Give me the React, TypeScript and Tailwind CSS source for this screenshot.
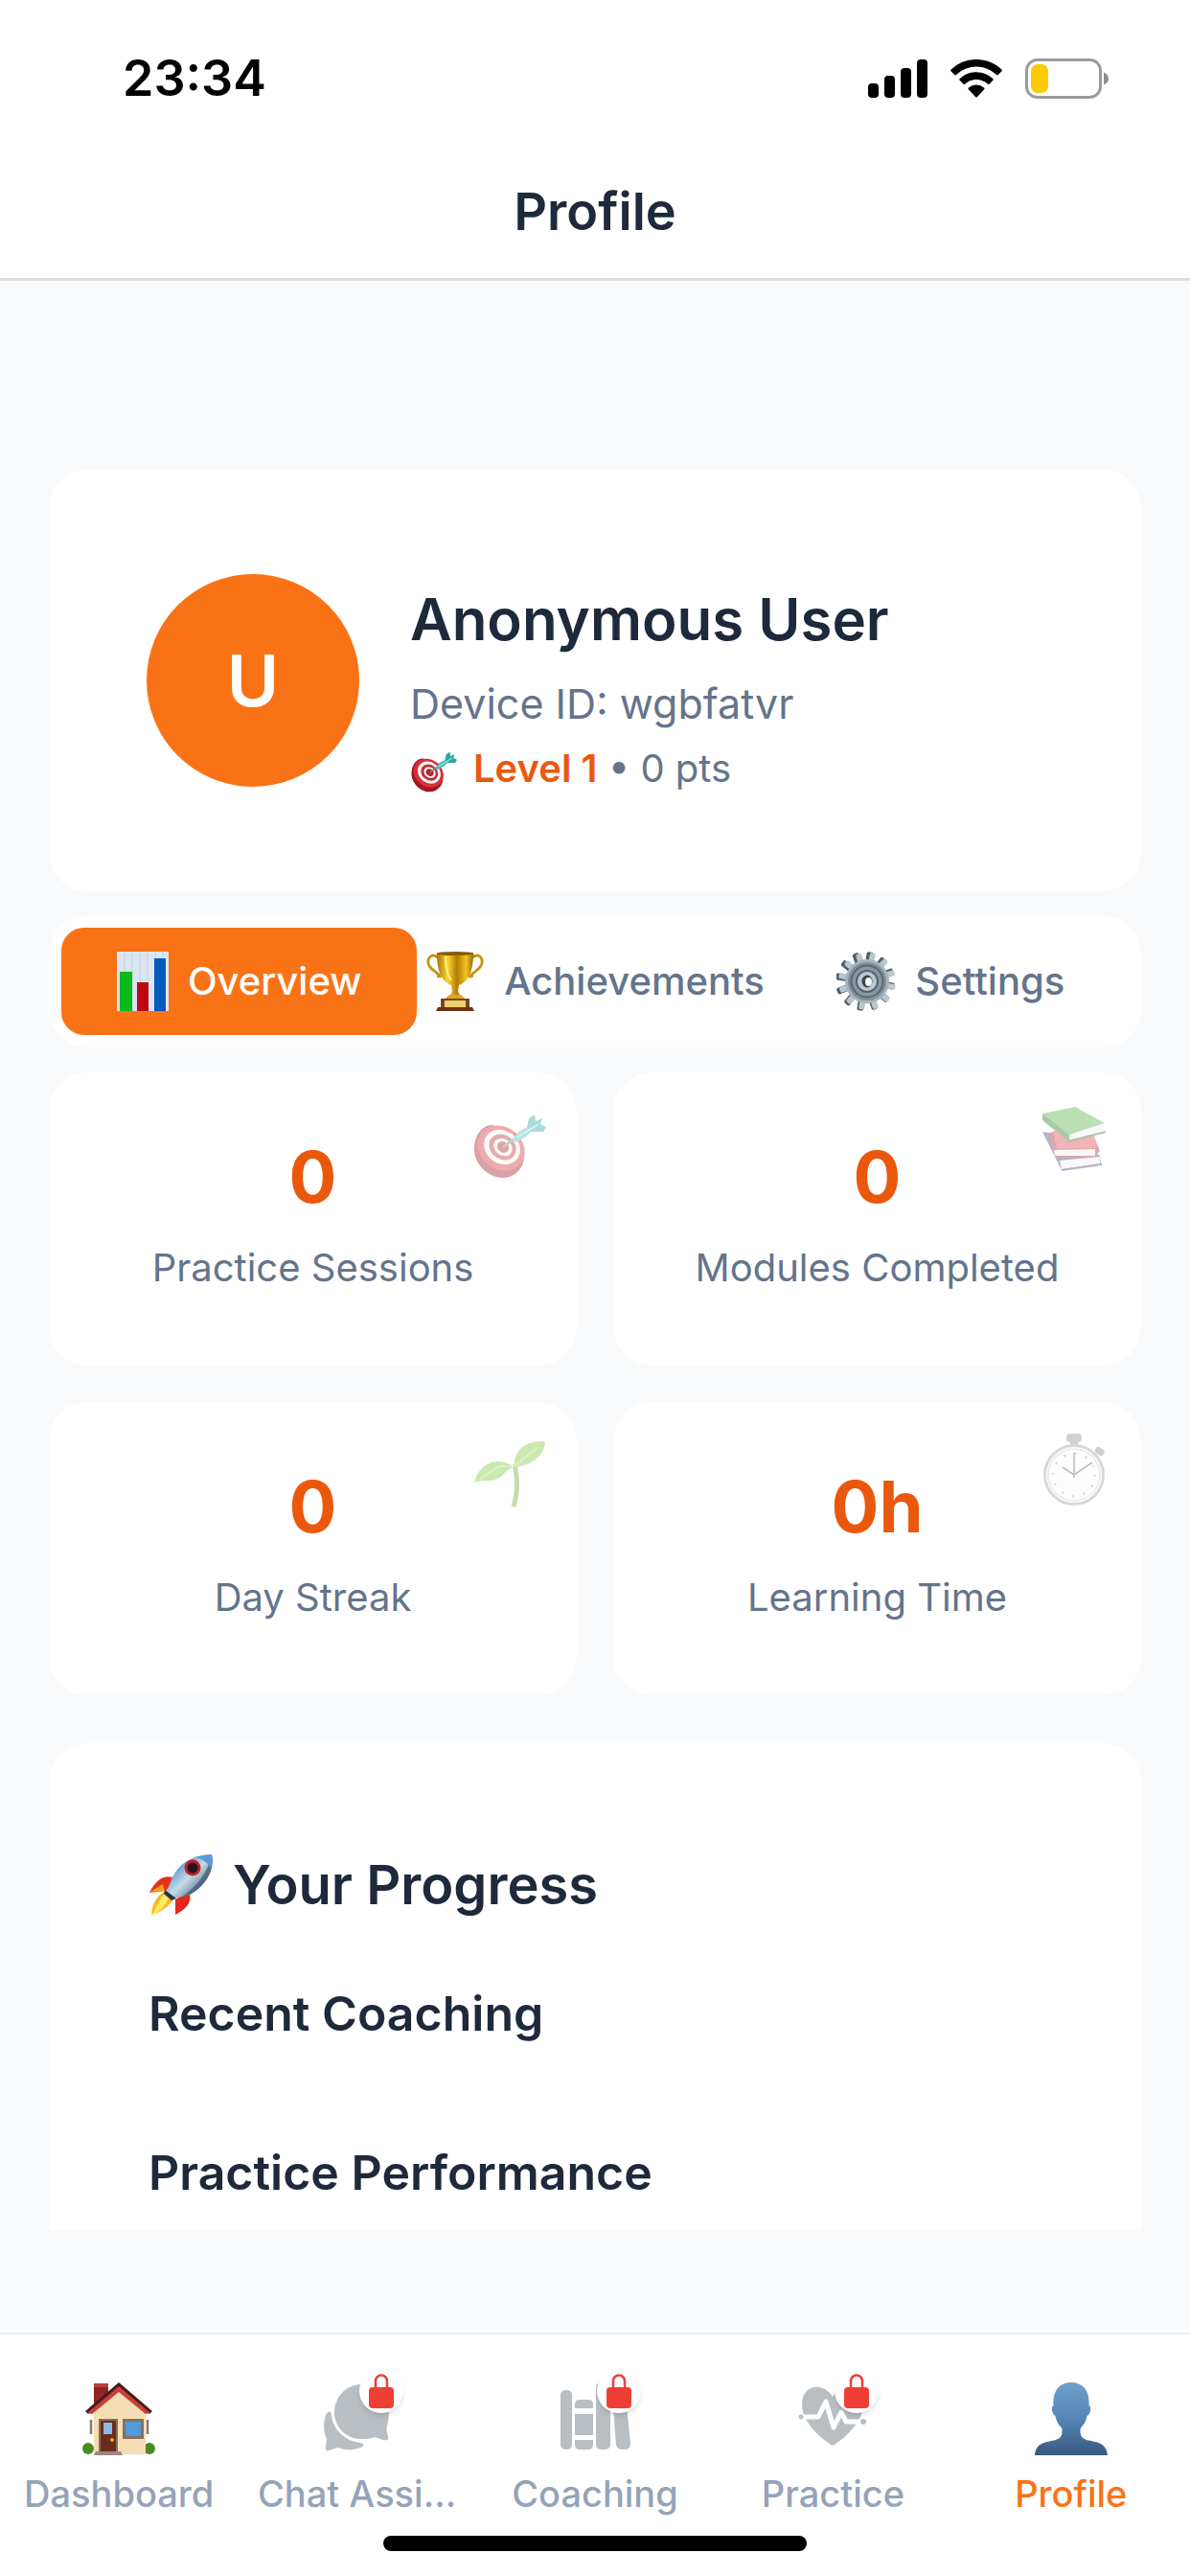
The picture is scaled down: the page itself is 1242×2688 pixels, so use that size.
import type { ReactNode } from "react";

type IconProps = { className?: string };

function SignalIcon() {
  return (
    <svg className="h-10 w-[62px]" viewBox="0 0 62 40" aria-hidden="true">
      <rect x="0" y="25" width="11" height="15" rx="4" />
      <rect x="17" y="17" width="11" height="23" rx="4" />
      <rect x="34" y="9" width="11" height="31" rx="4" />
      <rect x="51" y="0" width="11" height="40" rx="4" />
    </svg>
  );
}

function WifiIcon() {
  return (
    <svg className="h-10 w-[54px]" viewBox="0 0 54 40" aria-hidden="true">
      <path d="M27 0C37 0 46.500 4 53.300 10.400Q54.300 11.400 53.300 12.400L49.800 16Q49 16.800 48 15.900A30.500 30.500 0 0 0 6 15.900Q5 16.800 4.200 16L.7 12.400Q-.3 11.400.7 10.400A38.500 38.500 0 0 1 27 0Z" />
      <path d="M27 13.200A25 25 0 0 1 44.200 20Q45.200 21 44.200 22L40.500 25.700Q39.700 26.500 38.700 25.600A17.300 17.300 0 0 0 15.300 25.600Q14.300 26.500 13.500 25.700L9.800 22Q8.800 21 9.800 20A25 25 0 0 1 27 13.200Z" />
      <path d="M27 26.500A12 12 0 0 1 35 29.600Q36 30.600 35 31.600L28 38.900Q27 40 26 38.900L19 31.600Q18 30.600 19 29.600A12 12 0 0 1 27 26.500Z" />
    </svg>
  );
}

function BatteryIcon() {
  return (
    <svg className="h-[42px] w-[88px]" viewBox="0 0 88 42" aria-hidden="true">
      <rect x="1.500" y="1.500" width="77" height="39" rx="11" fill="none" stroke="#9b9b9b" strokeWidth="3" />
      <rect x="6" y="6" width="18" height="30" rx="7" fill="#fdcb05" />
      <path d="M82 14.500Q87 16.500 87 21Q87 25.500 82 27.500Z" fill="#8f8f8f" />
    </svg>
  );
}

function TargetIcon({ className }: IconProps) {
  return (
    <svg className={className} viewBox="0 -11 76 79" aria-hidden="true">
      <path d="M1 34C-1 50 14 67 31 67C43 67 53 57 53 44L45 20L20 12C9 12 2 22 1 34Z" fill="#a31621" />
      <ellipse cx="29" cy="36" rx="26" ry="22" transform="rotate(38 29 36)" fill="#d6303a" />
      <ellipse cx="30" cy="35" rx="20" ry="17" transform="rotate(38 30 35)" fill="#fbf3f0" />
      <ellipse cx="30.500" cy="35" rx="15" ry="12.500" transform="rotate(38 30.500 35)" fill="#b8323a" />
      <ellipse cx="31" cy="35" rx="10.500" ry="8.500" transform="rotate(38 31 35)" fill="#fbf3f0" />
      <ellipse cx="31" cy="35" rx="6.500" ry="5.500" transform="rotate(38 31 35)" fill="#b3202b" />
      <path d="M31 35L46 24" stroke="#75827f" strokeWidth="2.500" />
      <path d="M41 27L47 19L58 13L62 17L55 24L44 30Z" fill="#49bdb9" />
      <path d="M56 14L58 5L64 1L65 8L72 5L70 11L76 14L73 19L61 19Z" fill="#2aa7a5" />
      <path d="M45 25L68 11" stroke="#8fe0dc" strokeWidth="2" />
    </svg>
  );
}

function ChartIcon({ className }: IconProps) {
  return (
    <svg className={className} viewBox="0 0 54 62" aria-hidden="true">
      <rect width="54" height="62" fill="#dbe6f0" />
      <path d="M8 0V62M16 0V62M24 0V62M32 0V62M40 0V62M48 0V62" stroke="#c6d3e2" strokeWidth="1" />
      <rect x="3" y="21" width="13" height="41" fill="#0db81b" />
      <rect x="21" y="32" width="12" height="30" fill="#bf0711" />
      <rect x="39" y="7" width="12" height="55" fill="#0659bd" />
    </svg>
  );
}

function TrophyIcon({ className }: IconProps) {
  return (
    <svg className={className} viewBox="0 0 60 62" aria-hidden="true">
      <defs>
        <linearGradient id="trophy-gold" x1="0" x2="1">
          <stop offset="0" stopColor="#a97408" />
          <stop offset=".3" stopColor="#fbd62e" />
          <stop offset=".55" stopColor="#b27a06" />
          <stop offset=".8" stopColor="#f3c521" />
          <stop offset="1" stopColor="#9a6907" />
        </linearGradient>
      </defs>
      <path d="M13 7C7 1 1 5 2 12C3 19 11 20 15 27M47 7C53 1 59 5 58 12C57 19 49 20 45 27" fill="none" stroke="#c6930f" strokeWidth="2.800" />
      <path d="M13 23L12 27M47 23L48 27" stroke="#c6930f" strokeWidth="2.500" />
      <path d="M11 1H49C49 19 45 31 34 35L33 42L38 49H22L27 42L26 35C15 31 11 19 11 1Z" fill="url(#trophy-gold)" />
      <ellipse cx="30" cy="2" rx="19" ry="2" fill="#8a5c08" />
      <path d="M20 5C20 17 22 25 26 30" fill="none" stroke="#fff08a" strokeWidth="2" />
      <path d="M24 45H36L41 50H19Z" fill="#dba81b" />
      <path d="M15 49H45V59H15Z" fill="#7b4316" />
      <rect x="19" y="51" width="22" height="7" fill="#f2cf6e" />
      <path d="M12 58H48L50 62H10Z" fill="#6a3410" />
    </svg>
  );
}

const gearTeeth = [0, 30, 60, 90, 120, 150, 180, 210, 240, 270, 300, 330];

function GearIcon({ className }: IconProps) {
  return (
    <svg className={className} viewBox="0 0 62 62" aria-hidden="true">
      <g fill="#515e67">
        {gearTeeth.map((angle) => (
          <rect key={angle} x="27" y="0" width="7" height="15" rx="2" transform={`rotate(${angle + 9} 30 31)`} />
        ))}
      </g>
      <g fill="#b9c7d0">
        {gearTeeth.map((angle) => (
          <rect key={angle} x="29" y="1" width="6" height="15" rx="2" transform={`rotate(${angle + 12} 32 31)`} />
        ))}
      </g>
      <circle cx="32" cy="31" r="23" fill="#a5b3bd" />
      <circle cx="32" cy="31" r="20" fill="#7f8e98" />
      <circle cx="32" cy="31" r="16.500" fill="#8797a1" stroke="#5a6871" strokeWidth="2" />
      <circle cx="32" cy="31" r="11" fill="#bcc7ce" stroke="#56636c" strokeWidth="2" />
      <ellipse cx="32" cy="31" rx="5.500" ry="6.500" fill="#3b444b" />
      <ellipse cx="33.500" cy="31.500" rx="3.500" ry="4.500" fill="#f4f7f9" />
    </svg>
  );
}

function BooksIcon({ className }: IconProps) {
  return (
    <svg className={className} viewBox="-5 -4 76 79" aria-hidden="true">
      <path d="M0 26L20 66L61 60L60 51L30 30Z" fill="#4b4684" />
      <path d="M18 56L60 52V59L20 65Z" fill="#eef0f4" />
      <path d="M20 66L62 60" stroke="#4b4684" strokeWidth="2" />
      <path d="M7 27L13 52L54 52L60 46L54 32L22 24Z" fill="#b9202c" />
      <path d="M11 25L54 30L56 43L15 44Z" fill="#e4434c" />
      <path d="M12 45L55 44V51L13 51Z" fill="#f5efe8" />
      <path d="M0 7L0 14L27 36L30 28Z" fill="#2c7a2c" />
      <path d="M0 7L34 0L65 17L28 29Z" fill="#55b04c" />
      <path d="M28 29L64 18V25L28 35Z" fill="#edf3ee" />
      <path d="M27 36L66 26" stroke="#2c7a2c" strokeWidth="2" />
    </svg>
  );
}

function SproutIcon({ className }: IconProps) {
  return (
    <svg className={className} viewBox="-1 -8 76 79" aria-hidden="true">
      <path d="M42 25C45 40 46 52 41 69" fill="none" stroke="#6cab2b" strokeWidth="5" />
      <path d="M42 28C40 10 54 0 74 1C74 14 62 26 42 28Z" fill="#7cc73a" />
      <path d="M0 44C4 26 22 14 42 28C32 29 30 42 16 42C10 42 5 42 0 44Z" fill="#7cc73a" />
      <path d="M43 26L66 7M5 41L26 27L42 27" fill="none" stroke="#a5dd6a" strokeWidth="2" />
    </svg>
  );
}

function StopwatchIcon({ className }: IconProps) {
  return (
    <svg className={className} viewBox="-5 0 76 79" aria-hidden="true">
      <rect x="29" y="8" width="8" height="8" fill="#858b92" />
      <rect x="25" y="1" width="16" height="9" rx="4" fill="#8c9299" />
      <rect x="55" y="16" width="10" height="7" rx="3" transform="rotate(35 60 19)" fill="#858b92" />
      <circle cx="33" cy="44" r="30.500" fill="#fbfbfc" stroke="#9da1a7" strokeWidth="3" />
      <circle cx="33" cy="44" r="27" fill="none" stroke="#c8cbd0" strokeWidth="1.500" />
      <circle cx="33" cy="44" r="22" fill="none" stroke="#8b9097" strokeWidth="2.500" strokeDasharray="1.500 10.020" />
      <path d="M33 47V21M21 36L33 44L52 31" fill="none" stroke="#5c6167" strokeWidth="1.600" />
    </svg>
  );
}

function RocketIcon({ className }: IconProps) {
  return (
    <svg className={className} viewBox="0 0 68 64" aria-hidden="true">
      <defs>
        <linearGradient id="rocket-body" x1="0" y1="0" x2="1" y2="1">
          <stop offset=".15" stopColor="#3d7fc6" />
          <stop offset=".5" stopColor="#c5dbe8" />
          <stop offset=".85" stopColor="#48617e" />
        </linearGradient>
      </defs>
      <path d="M25 24C15 21 7 28 1 40L18 38L26 30Z" fill="#e5301c" />
      <path d="M2 39L15 31L17 38Z" fill="#fba31a" />
      <path d="M42 39C46 47 42 56 28 63L28 47Z" fill="#e02a1f" />
      <path d="M19 38C9 42 4 51 3 63C14 60 22 54 27 45Z" fill="#fbb524" />
      <path d="M19 39C12 45 9 53 4 63C13 59 19 52 22 43Z" fill="#ffe95c" />
      <path d="M19 38L25 24C32 9 47 0 66 0C70 17 58 34 43 42L27 46Z" fill="url(#rocket-body)" />
      <path d="M66 0C70 17 58 34 43 42L35 44C51 33 62 19 66 0Z" fill="#34516f" opacity=".65" />
      <path d="M49 3C56 1 61 0 66 0C67 5 67 9 65 14C62 9 56 5 49 3Z" fill="#5c9bd8" />
      <path d="M17 37L29 46L24 48L16 41Z" fill="#26334a" />
      <circle cx="46" cy="14" r="8.500" fill="#c51f25" />
      <circle cx="46" cy="14" r="5.500" fill="#241521" />
    </svg>
  );
}

function HouseIcon({ className }: IconProps) {
  return (
    <svg className={className} viewBox="0 0 76 76" aria-hidden="true">
      <rect x="12" y="2" width="15" height="24" fill="#8f2420" />
      <rect x="12" y="1" width="15" height="4" fill="#b2423b" />
      <circle cx="6" cy="69" r="6" fill="#4c8a25" />
      <circle cx="70" cy="69" r="6" fill="#4c8a25" />
      <path d="M12 30L38 4L66 30V75H12Z" fill="#f5deb3" />
      <path d="M3 30L38 0L73 30L70 33L38 7L6 33Z" fill="#441c1d" />
      <path d="M5 32L38 4L71 32L66 33L38 10L10 33Z" fill="#c93e36" />
      <rect x="17" y="38" width="20" height="34" fill="#8c6d56" />
      <rect x="19" y="40" width="16" height="32" fill="#6b2c1b" />
      <rect x="22" y="42" width="9" height="12" fill="#8abbe4" />
      <circle cx="31" cy="60" r="2" fill="#f4b32b" />
      <rect x="42" y="38" width="22" height="21" fill="#84725f" />
      <rect x="45" y="41" width="16" height="15" fill="#4f9bdc" />
      <path d="M9 39V54M68 39V54" stroke="#8a7a66" strokeWidth="2.500" />
      <path d="M14 72H40L42 76H12Z" fill="#9b8880" />
    </svg>
  );
}

function PersonIcon({ className }: IconProps) {
  return (
    <svg className={className} viewBox="0 0 78 78" aria-hidden="true">
      <defs>
        <linearGradient id="person-fill" x1="0" y1="0" x2="0" y2="1">
          <stop offset="0" stopColor="#6fa1cd" />
          <stop offset=".5" stopColor="#5485b6" />
          <stop offset="1" stopColor="#38597f" />
        </linearGradient>
      </defs>
      <path d="M39 0C52 0 59 9 58 25C61 25 60 34 56 36C55 42 52 46 49 49C48 57 50 60 57 62C69 64 77 66 78 78H0C1 66 9 64 21 62C28 60 30 57 29 49C26 46 23 42 22 36C18 34 17 25 20 25C19 9 26 0 39 0Z" fill="url(#person-fill)" />
    </svg>
  );
}

function ChatIcon({ className }: IconProps) {
  return (
    <svg className={className} viewBox="0 0 76 76" fill="#b9bec2" aria-hidden="true">
      <path d="M42 2C60 2 71 15 71 30C71 36 70 41 69 45C68 49 69 53 70 56C71 60 68 61 65 60L56 57C51 59 48 59 42 59C25 59 14 46 14 31C14 16 26 2 42 2Z" />
      <path d="M7 31C10 29 11 32 11 35C13 50 25 61 41 63C46 64 45 67 41 68C34 71 25 71 18 68L8 71C5 72 4 70 5 67L6 59C2 51 2 37 7 31Z" />
    </svg>
  );
}

function LibraryIcon({ className }: IconProps) {
  return (
    <svg className={className} viewBox="0 0 76 76" fill="#b9bec2" aria-hidden="true">
      <rect x="2" y="8" width="12" height="62" rx="5" />
      <path d="M17 27V23Q17 18 22 18H31Q36 18 36 23V27Z" />
      <rect x="17" y="33" width="19" height="22" />
      <path d="M17 60H36V65Q36 70 31 70H22Q17 70 17 65Z" />
      <rect x="39" y="0" width="15" height="70" rx="5" />
      <path d="M56 14Q55 9 60 8L65 8Q69 8 70 13L75 64Q75 69 71 70H66Q61 70 60 65Z" />
    </svg>
  );
}

function HeartPulseIcon({ className }: IconProps) {
  return (
    <svg className={className} viewBox="0 0 76 76" aria-hidden="true">
      <path d="M38 66C31 62 6 44 6 23C6 2 28 -1 38 15C48 -1 70 2 70 23C70 44 45 62 38 66Z" fill="#b9bec2" />
      <path d="M6 36H23L31 20L39 47L47 31L52 41H69" fill="none" stroke="#fff" strokeWidth="5" strokeLinejoin="round" />
      <circle cx="5" cy="36" r="2.500" fill="#b9bec2" />
      <circle cx="70" cy="41" r="3" fill="#b9bec2" />
    </svg>
  );
}

function LockBadge() {
  return (
    <span className="absolute -top-3.5 -right-2.5 flex size-[46px] items-center justify-center rounded-full bg-white shadow-md">
      <svg className="h-9 w-[26px]" viewBox="0 0 26 36" aria-hidden="true">
        <path d="M7 16V7.500A6 6 0 0 1 19 7.500V16" fill="none" stroke="#ee3f36" strokeWidth="2.500" />
        <rect x="0" y="14" width="26" height="22" rx="4" fill="#ee3f36" />
      </svg>
    </span>
  );
}

const tabs = [
  { label: "Overview", icon: <ChartIcon className="h-[62px] w-[54px] shrink-0" />, active: true },
  { label: "Achievements", icon: <TrophyIcon className="size-[62px] shrink-0" />, active: false },
  { label: "Settings", icon: <GearIcon className="size-[62px] shrink-0" />, active: false },
];

const stats = [
  { value: "0", label: "Practice Sessions", icon: <TargetIcon className="h-[79px] w-[76px]" /> },
  { value: "0", label: "Modules Completed", icon: <BooksIcon className="h-[79px] w-[76px]" /> },
  { value: "0", label: "Day Streak", icon: <SproutIcon className="h-[79px] w-[76px]" /> },
  { value: "0h", label: "Learning Time", icon: <StopwatchIcon className="h-[79px] w-[76px]" /> },
];

const navItems: { label: string; icon: ReactNode; locked?: boolean; active?: boolean }[] = [
  { label: "Dashboard", icon: <HouseIcon className="size-[76px]" /> },
  { label: "Chat Assi...", icon: <ChatIcon className="size-[76px]" />, locked: true },
  { label: "Coaching", icon: <LibraryIcon className="size-[76px]" />, locked: true },
  { label: "Practice", icon: <HeartPulseIcon className="size-[76px]" />, locked: true },
  { label: "Profile", icon: <PersonIcon className="size-[76px]" />, active: true },
];

export default function App() {
  return (
    <div className="flex min-h-screen flex-col bg-[#f8fafc] font-['Inter',sans-serif] text-[#1e293b]">
      <header className="border-b-3 border-[#dedfe0] bg-white">
        <div className="flex h-[164px] items-center justify-between pr-[84px] pl-32 text-black">
          <span className="text-[52px] font-semibold">23:34</span>
          <div className="flex items-center gap-6">
            <SignalIcon />
            <WifiIcon />
            <BatteryIcon />
          </div>
        </div>
        <h1 className="pt-5 pb-8 text-center text-[54px] leading-[74px] font-semibold">Profile</h1>
      </header>

      <main className="flex flex-1 flex-col px-[51px] pt-[197px] pb-[107px]">
        <section className="flex items-center gap-[53px] rounded-[40px] bg-white px-[102px] py-[109px]">
          <div className="flex size-[222px] shrink-0 items-center justify-center rounded-full bg-[#f97316] text-[74px] font-semibold text-white">
            U
          </div>
          <div className="-my-4 pt-4">
            <h2 className="text-[60px] leading-[80px] font-semibold">Anonymous User</h2>
            <p className="mt-4 text-[43px] leading-[64px] text-[#64748b]">Device ID: wgbfatvr</p>
            <p className="mt-2 flex items-center gap-4 text-[40px] leading-[56px] text-[#64748b]">
              <TargetIcon className="size-[50px]" />
              <span>
                <span className="font-semibold text-[#ea580c]">Level 1</span> • 0 pts
              </span>
            </p>
          </div>
        </section>

        <div role="tablist" className="mt-[25px] grid grid-cols-3 rounded-[40px] bg-white p-[13px]">
          {tabs.map((tab) => (
            <button
              key={tab.label}
              type="button"
              role="tab"
              aria-selected={tab.active}
              className={
                tab.active
                  ? "flex h-28 items-center justify-center gap-5 rounded-3xl bg-[#f97316] text-[40px] font-medium text-white"
                  : "flex h-28 items-center justify-center gap-5 rounded-3xl text-[40px] font-medium text-[#64748b]"
              }
            >
              {tab.icon}
              {tab.label}
            </button>
          ))}
        </div>

        <section className="mt-[26px] grid grid-cols-2 gap-[38px]">
          {stats.map((stat) => (
            <div key={stat.label} className="relative rounded-[40px] bg-white pt-16 pb-[74px] text-center">
              <div className="text-[74px] leading-[90px] font-bold text-[#ea580c]">{stat.value}</div>
              <div className="mt-[22px] text-[40px] leading-[56px] text-[#64748b]">{stat.label}</div>
              <div className="absolute top-8 right-8 opacity-40">{stat.icon}</div>
            </div>
          ))}
        </section>

        <section className="mt-[50px] flex-1 rounded-t-[40px] bg-white px-[104px] pt-28">
          <h2 className="flex items-center gap-5 text-[56px] leading-[72px] font-semibold">
            <RocketIcon className="h-16 w-[68px]" />
            Your Progress
          </h2>
          <h3 className="mt-[66px] text-[50px] leading-[64px] font-semibold">Recent Coaching</h3>
          <h3 className="mt-[102px] text-[50px] leading-[64px] font-semibold">Practice Performance</h3>
        </section>
      </main>

      <nav className="border-t-2 border-[#ebedef] bg-white pb-[26px]">
        <div className="grid grid-cols-5">
          {navItems.map((item) => (
            <a
              key={item.label}
              href={`#${item.label.toLowerCase()}`}
              aria-current={item.active ? "page" : undefined}
              className={
                item.active
                  ? "flex flex-col items-center pt-[50px] text-[38px] leading-[56px] font-medium text-[#f97316]"
                  : "flex flex-col items-center pt-[50px] text-[38px] leading-[56px] font-medium text-[#94a3b8]"
              }
            >
              <span className="relative">
                {item.icon}
                {item.locked && <LockBadge />}
              </span>
              <span className="mt-3 whitespace-nowrap">{item.label}</span>
            </a>
          ))}
        </div>
        <div className="mx-auto mt-4 h-4 w-[442px] rounded-full bg-black" />
      </nav>
    </div>
  );
}
